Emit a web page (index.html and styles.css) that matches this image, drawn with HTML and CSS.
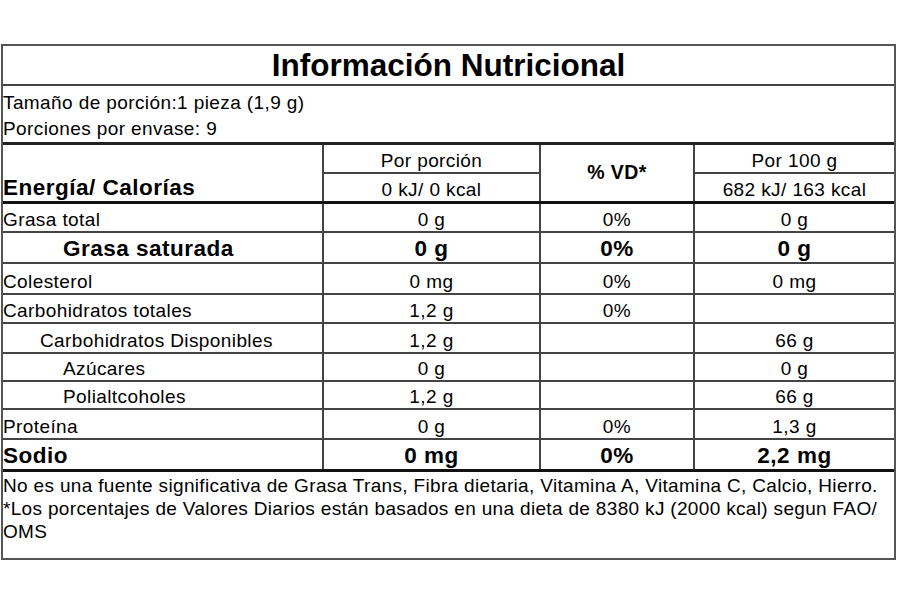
FILE: index.html
```html
<!DOCTYPE html>
<html lang="es">
<head>
<meta charset="utf-8">
<title>Información Nutricional</title>
<link rel="stylesheet" href="styles.css">
</head>
<body>
<div class="label">
  <h1 class="title">Información Nutricional</h1>
  <div class="serving">
    <div>Tamaño de porción:1 pieza (1,9 g)</div>
    <div>Porciones por envase: 9</div>
  </div>
  <table class="facts">
    <colgroup>
      <col class="c-name"><col class="c-portion"><col class="c-vd"><col class="c-100">
    </colgroup>
    <thead>
      <tr class="h-top">
        <th rowspan="2" class="name strong">Energía/ Calorías</th>
        <td>Por porción</td>
        <th rowspan="2" class="vd">% VD*</th>
        <td>Por 100 g</td>
      </tr>
      <tr class="h-bottom">
        <td>0 kJ/ 0 kcal</td>
        <td>682 kJ/ 163 kcal</td>
      </tr>
    </thead>
    <tbody>
      <tr class="r30"><td class="name">Grasa total</td><td>0 g</td><td>0%</td><td>0 g</td></tr>
      <tr class="r31 strong"><td class="name ind2">Grasa saturada</td><td>0 g</td><td>0%</td><td>0 g</td></tr>
      <tr class="r31"><td class="name">Colesterol</td><td>0 mg</td><td>0%</td><td>0 mg</td></tr>
      <tr class="r29"><td class="name">Carbohidratos totales</td><td>1,2 g</td><td>0%</td><td></td></tr>
      <tr class="r30"><td class="name ind1">Carbohidratos Disponibles</td><td>1,2 g</td><td></td><td>66 g</td></tr>
      <tr class="r28"><td class="name ind2">Azúcares</td><td>0 g</td><td></td><td>0 g</td></tr>
      <tr class="r28"><td class="name ind2">Polialtcoholes</td><td>1,2 g</td><td></td><td>66 g</td></tr>
      <tr class="r30"><td class="name">Proteína</td><td>0 g</td><td>0%</td><td>1,3 g</td></tr>
      <tr class="r32 strong last"><td class="name">Sodio</td><td>0 mg</td><td>0%</td><td>2,2 mg</td></tr>
    </tbody>
  </table>
  <div class="notes">
    <p>No es una fuente significativa de Grasa Trans, Fibra dietaria, Vitamina A, Vitamina C, Calcio, Hierro.</p>
    <p>*Los porcentajes de Valores Diarios están basados en una dieta de 8380 kJ (2000 kcal) segun FAO/<br>OMS</p>
  </div>
</div>
</body>
</html>
```
FILE: styles.css
```css
html, body {
  margin: 0;
  padding: 0;
  background: #fff;
}

body {
  font-family: "Liberation Sans", Arial, sans-serif;
  color: #000;
  font-size: 19px;
  letter-spacing: 0.4px;
}

.label {
  margin: 44px 0 0 1px;
  width: 891px;
  border: 2px solid #555;
}

.title {
  margin: 0;
  height: 38px;
  line-height: 38px;
  font-size: 31.5px;
  font-weight: bold;
  letter-spacing: 0;
  text-align: center;
  border-bottom: 2px solid #444;
}

.serving {
  padding-top: 4px;
  line-height: 26px;
  border-bottom: 3px solid #222;
}

.facts {
  width: 100%;
  border-collapse: collapse;
  table-layout: fixed;
}

.c-name { width: 320px; }
.c-portion { width: 217px; }
.c-vd { width: 154px; }
.c-100 { width: 200px; }

.facts th,
.facts td {
  padding: 0;
  font-weight: normal;
  text-align: center;
  vertical-align: bottom;
  line-height: normal;
  border-bottom: 2px solid #444;
  border-left: 2px solid #444;
  white-space: nowrap;
}

.facts th:first-child,
.facts tbody td:first-child {
  border-left: none;
}

.facts .name {
  text-align: left;
}

.facts .strong,
.facts tr.strong td {
  font-weight: bold;
  font-size: 22.5px;
  letter-spacing: 0.5px;
}

.facts .vd {
  font-weight: bold;
  font-size: 19.5px;
  vertical-align: middle;
}

.h-top { height: 28px; }
.h-bottom { height: 29px; }

.facts thead .name,
.facts thead .vd,
.h-bottom td {
  border-bottom: 3px solid #111;
}

.r28 { height: 28px; }
.r29 { height: 29px; }
.r30 { height: 30px; }
.r31 { height: 31px; }
.r32 { height: 31px; }

.facts tr.last td {
  border-bottom: 3px solid #111;
}

.ind1 { padding-left: 37px !important; }
.ind2 { padding-left: 60px !important; }

.notes {
  padding: 2px 0 15px;
  line-height: 23px;
  letter-spacing: 0.33px;
}

.notes p {
  margin: 0;
}
```
